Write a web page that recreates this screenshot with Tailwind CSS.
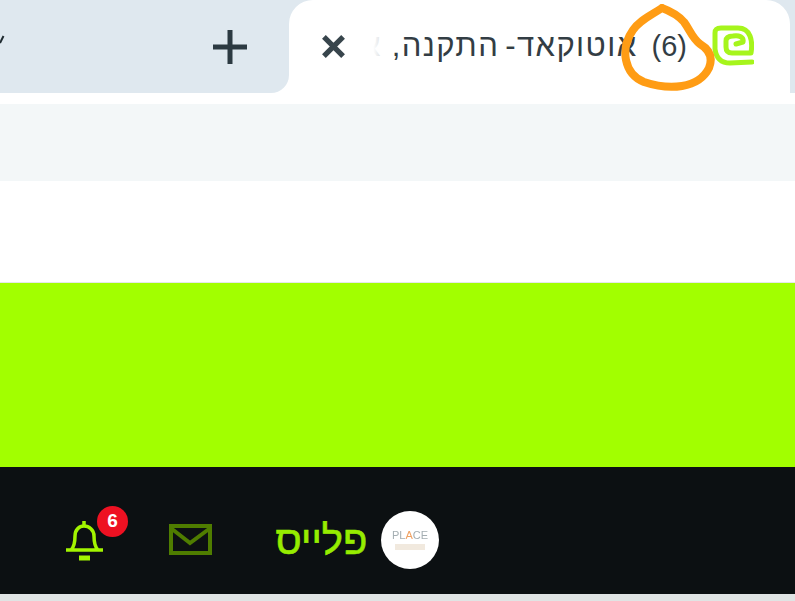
<!DOCTYPE html>
<html lang="he">
<head>
    <meta charset="UTF-8">
    <meta name="viewport" content="width=device-width, initial-scale=1.0">
    <title>אוטוקאד - התקנה</title>
    <script src="https://cdn.jsdelivr.net/npm/@tailwindcss/browser@4"></script>
</head>
<body class="relative h-[601px] w-[795px] overflow-hidden bg-[#e0e4e4] font-['Liberation_Sans',sans-serif]">
  <!-- Tab strip -->
  <div class="flex h-[104px] bg-white">
    <div class="flex h-[93px] w-[289px] items-center justify-between rounded-br-[18px] bg-[#dfe8ef] pr-[42px]">
      <svg class="mb-[14px] h-[10px] w-[5px]" viewBox="0 0 5 10" fill="none" stroke="#1f2a30" stroke-width="2"><path d="M3.5 1 L0 8"/></svg>
      <svg class="h-[34px] w-[34px]" viewBox="0 0 34 34" fill="none" stroke="#2c3a42" stroke-width="5"><path d="M17 0v34M0 17h34"/></svg>
    </div>
    <div class="h-[93px] flex-1 bg-[#dfe8ef]">
      <div class="flex h-[104px] w-[501px] items-center rounded-t-[24px] bg-white pb-[12px] pl-[33px] pr-[36px]">
        <svg class="h-[23px] w-[23px] shrink-0" viewBox="0 0 24 24" fill="none" stroke="#38454c" stroke-width="5.5"><path d="M2 2l20 20M22 2L2 22"/></svg>
        <div class="relative ml-[24px] min-w-0 flex-1 whitespace-nowrap text-[31px] leading-[34px] tracking-[1.4px] text-[#333d44]" dir="rtl">
          <span class="ml-[4px] text-[29px] tracking-normal">(6)</span> אוטוקאד- <span class="mr-[-4px]">התקנה, א</span>
          <div class="absolute inset-y-0 left-[-12px] w-[36px] bg-gradient-to-r from-white from-45% to-white/60"></div>
        </div>
        <svg class="ml-[25px] h-[42px] w-[42px] shrink-0 blur-[0.5px]" viewBox="0 0 42 42" fill="none" stroke="#a6f51c" stroke-width="5" stroke-linecap="round" stroke-linejoin="round">
          <path d="M40 37 L18 38 C8 38 4 32 3 24 L3 8 C3 4 5 3 9 3 L26 3 C32 3 36 6 38 11 C40 16 40 22 39 28 L20 28 C16 28 14 26 14 22 L14 16 C14 12 17 11 21 11 C27 10 32 12 31 17 L24 19"/>
        </svg>
      </div>
    </div>
  </div>

  <!-- Toolbar -->
  <div class="h-[77px] bg-[#f3f7f8]"></div>
  <div class="h-[102px] border-b border-[#e4e8e8] bg-white"></div>

  <!-- Green hero -->
  <div class="h-[184px] bg-[#a2ff00]"></div>

  <!-- User bar -->
  <div class="flex h-[127px] items-center bg-[#0c1012] pl-[65px] pt-[18px]">
    <div class="relative h-[40px] w-[40px]">
      <svg class="h-[42px] w-[40px]" viewBox="0 0 40 42" fill="none" stroke="#a2f500" stroke-width="3.5">
        <path d="M1 30h37M6 30c3-3 4-6 4-14c0-6 4-10 9-10s10 4 10 10c0 8 1 11 4 14M19 1v5"/>
        <path d="M14 38h11" stroke-width="5"/>
      </svg>
      <span class="absolute left-[32px] top-[-14px] flex h-[31px] w-[31px] items-center justify-center rounded-full bg-[#ee1122] text-[19px] font-bold text-white">6</span>
    </div>
    <svg class="ml-[64px] h-[31px] w-[43px]" viewBox="0 0 43 31" fill="none" stroke="#4f7d00" stroke-width="4">
      <rect x="2" y="2" width="39" height="27"/>
      <path d="M3 5l18 14L40 5"/>
    </svg>
    <span class="ml-[63px] w-[93px] whitespace-nowrap text-center text-[40px] leading-none text-[#96ec00] [-webkit-text-stroke:0.6px_#96ec00]" dir="rtl">פלייס</span>
    <div class="ml-[13px] flex h-[58px] w-[58px] flex-col items-center justify-center rounded-full bg-white">
      <span class="text-[11px] leading-none text-[#a4aeb2] blur-[0.5px]">PL<span class="text-[#f0a060]">A</span>CE</span>
      <span class="mt-[3px] h-[6px] w-[30px] bg-[#f1e9de]"></span>
    </div>
  </div>

  <!-- Hand drawn circle -->
  <svg class="absolute left-0 top-0 h-[104px] w-[795px] blur-[0.5px]" viewBox="0 0 795 104" fill="none" stroke="#ff9c14" stroke-width="8" stroke-linecap="round" stroke-linejoin="round">
    <path d="M662 8 C650 16 640 20 633 30 C626 40 624 50 626 60 C628 70 634 78 644 82 C656 86 670 88 682 86 C694 84 704 78 709 68 C713 58 710 50 700 44 C692 38 690 30 684 22 C678 15 670 11 662 8"/>
  </svg>
</body>
</html>
